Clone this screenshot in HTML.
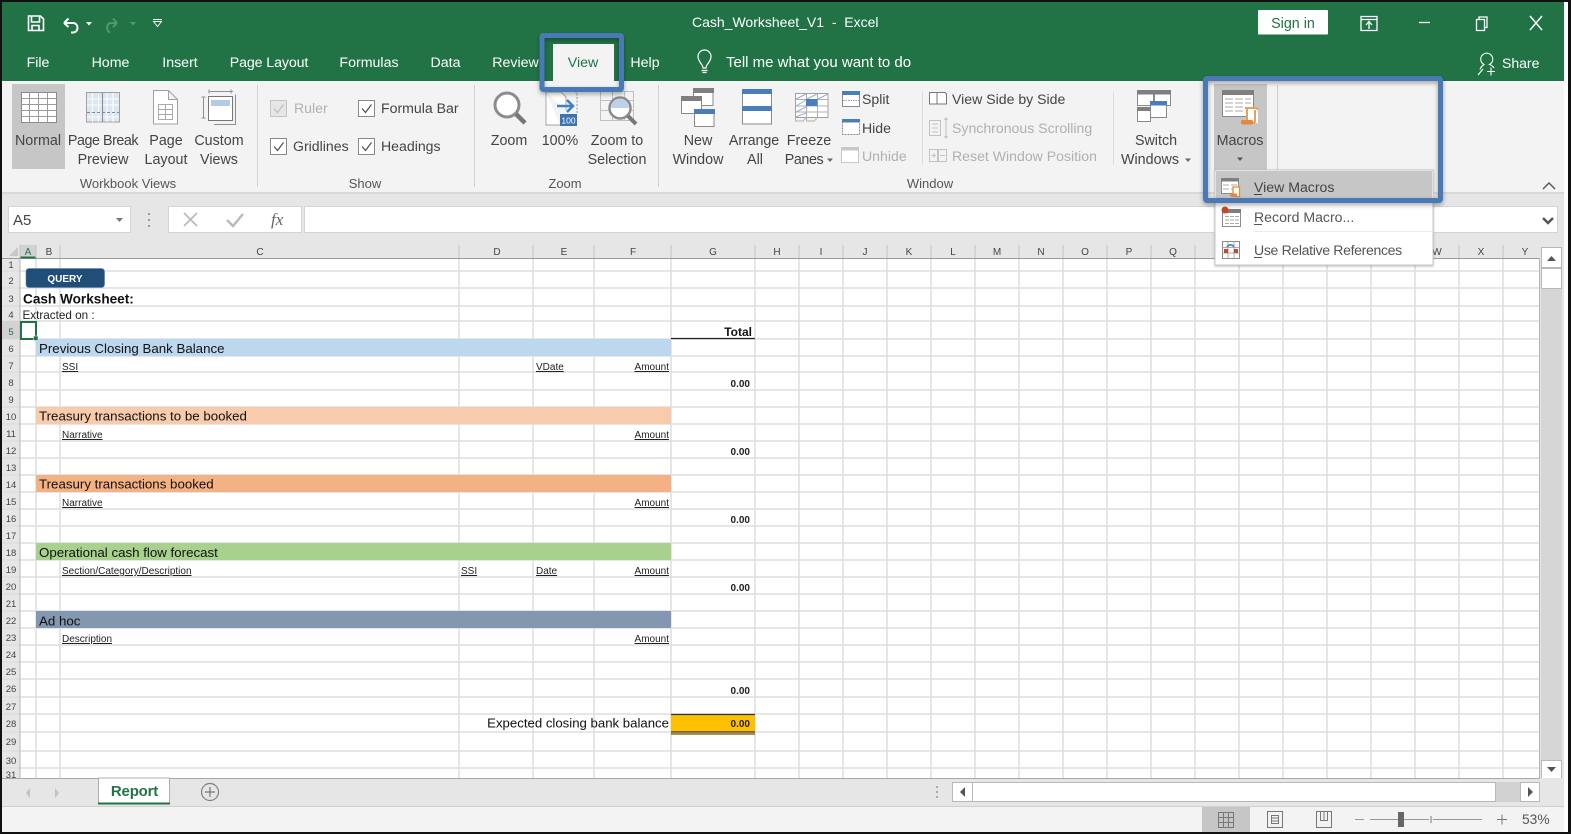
<!DOCTYPE html>
<html><head><meta charset="utf-8"><title>Cash_Worksheet_V1 - Excel</title>
<style>
html,body{margin:0;padding:0;background:#fff;width:1571px;height:834px;overflow:hidden}
svg{display:block;position:absolute;left:0;top:0;filter:blur(.3px)}
text{font-family:"Liberation Sans",sans-serif;white-space:pre}
.r{font-size:14.3px;fill:#444;text-anchor:middle}
.l{font-size:14.1px;fill:#444}
.g{font-size:14.1px;fill:#b0b0b0}
.gl{font-size:13px;fill:#555;text-anchor:middle}
.tab{font-size:14.2px;fill:#fff;text-anchor:middle}
.h{font-size:10px;fill:#444;text-anchor:middle}
.n{font-size:9.5px;fill:#444;text-anchor:middle}
.s{font-size:10px;fill:#222;text-decoration:underline}
.e{text-anchor:end}
.b{font-size:10px;font-weight:bold;fill:#222;text-anchor:end}
.band{font-size:13.3px;fill:#111}
</style></head><body>
<svg width="1571" height="834" viewBox="0 0 1571 834" xmlns="http://www.w3.org/2000/svg">
<defs>
<filter id="sh" x="-10%" y="-20%" width="120%" height="140%"><feDropShadow dx="0" dy="2" stdDeviation="2.5" flood-color="#000" flood-opacity=".35"/></filter>
<filter id="ms" x="-5%" y="-5%" width="110%" height="110%"><feDropShadow dx="0" dy="1" stdDeviation="1.2" flood-color="#000" flood-opacity=".25"/></filter>
</defs>
<!-- page base -->
<rect x="0" y="0" width="1571" height="834" fill="#fff"/>
<rect x="2" y="2" width="1562" height="79" fill="#217346"/>
<rect x="2" y="81" width="1562" height="111" fill="#f3f3f3"/>
<rect x="2" y="192" width="1562" height="66" fill="#e6e6e6"/>
<rect x="2" y="192" width="1562" height="2" fill="#d8d8d8"/>
<!-- formula bar -->
<rect x="8.5" y="206.5" width="122" height="26" fill="#fff" stroke="#d4d4d4"/>
<rect x="168.5" y="206.5" width="133" height="26" fill="#fff" stroke="#d4d4d4"/>
<rect x="304.5" y="206.5" width="1253" height="26" fill="#fff" stroke="#d4d4d4"/>
<text x="13" y="225" style="font-size:15px;fill:#444">A5</text>
<path d="M116 218h7l-3.500 4z" fill="#777"/>
<path d="M149 213v2M149 219v2M149 225v2" stroke="#999" stroke-width="2"/>
<path d="M184 213l13 13M197 213l-13 13" stroke="#bbb" stroke-width="1.800" fill="none"/>
<path d="M227 220l6 6 10-12" stroke="#bbb" stroke-width="2.500" fill="none"/>
<text x="271" y="225" style="font-family:'Liberation Serif',serif;font-style:italic;font-size:17px;fill:#666">fx</text>
<path d="M1543 218l5 5 5-5" stroke="#555" stroke-width="2.500" fill="none"/>
<!-- sheet -->
<rect x="2" y="258" width="18" height="520" fill="#e6e6e6"/>
<rect x="20" y="258" width="1520" height="520" fill="#fff"/>
<rect x="1540" y="243" width="24" height="563" fill="#e6e6e6"/>
<g stroke="#dedede" stroke-width="1.500" fill="none">
<path d="M36 258V778M60 258V778M459 258V778M533 258V778M594 258V778M671 258V778M755 258V778M799 258V778M843 258V778M887 258V778M931 258V778M975 258V778M1019 258V778M1063 258V778M1107 258V778M1151 258V778M1195 258V778M1239 258V778M1283 258V778M1327 258V778M1371 258V778M1415 258V778M1459 258V778M1503 258V778"/>
<path d="M2 271H1540M2 288H1540M2 306H1540M2 321H1540M2 339H1540M2 356H1540M2 372H1540M2 390H1540M2 407H1540M2 424H1540M2 441H1540M2 458H1540M2 475H1540M2 492H1540M2 509H1540M2 526H1540M2 543H1540M2 560H1540M2 577H1540M2 594H1540M2 611H1540M2 628H1540M2 645H1540M2 662H1540M2 679H1540M2 697H1540M2 714H1540M2 732H1540M2 751H1540M2 768H1540"/>
</g>
<!-- col header -->
<rect x="20" y="245" width="16" height="13" fill="#d2d2d2"/>
<path d="M2 258.500H1540" stroke="#9a9a9a" stroke-width="1"/>
<path d="M20 257.500H36" stroke="#217346" stroke-width="2"/>
<path d="M1539.500 258V778" stroke="#b5b5b5"/>
<path d="M20 245V258M36 245V258M60 245V258M459 245V258M533 245V258M594 245V258M671 245V258M755 245V258M799 245V258M843 245V258M887 245V258M931 245V258M975 245V258M1019 245V258M1063 245V258M1107 245V258M1151 245V258M1195 245V258M1239 245V258M1283 245V258M1327 245V258M1371 245V258M1415 245V258M1459 245V258M1503 245V258" stroke="#c4c4c4"/>
<path d="M18 247v9h-9z" fill="#c8c8c8"/>
<g class="col">
<text class="h" x="28" y="255" style="fill:#217346">A</text><text class="h" x="49" y="255">B</text><text class="h" x="260" y="255">C</text><text class="h" x="497" y="255">D</text><text class="h" x="564" y="255">E</text><text class="h" x="633" y="255">F</text><text class="h" x="713" y="255">G</text><text class="h" x="777" y="255">H</text><text class="h" x="821" y="255">I</text><text class="h" x="865" y="255">J</text><text class="h" x="909" y="255">K</text><text class="h" x="953" y="255">L</text><text class="h" x="997" y="255">M</text><text class="h" x="1041" y="255">N</text><text class="h" x="1085" y="255">O</text><text class="h" x="1129" y="255">P</text><text class="h" x="1173" y="255">Q</text><text class="h" x="1437" y="255">W</text><text class="h" x="1481" y="255">X</text><text class="h" x="1525" y="255">Y</text>
</g>
<!-- row headers -->
<rect x="2" y="321" width="18" height="18" fill="#d2d2d2"/>
<path d="M20 258V778" stroke="#b5b5b5"/>
<g>
<text class="n" x="11" y="268">1</text><text class="n" x="11" y="284">2</text><text class="n" x="11" y="302">3</text><text class="n" x="11" y="318">4</text><text class="n" x="11" y="335" style="fill:#217346">5</text><text class="n" x="11" y="352">6</text><text class="n" x="11" y="369">7</text><text class="n" x="11" y="386">8</text><text class="n" x="11" y="403">9</text><text class="n" x="11" y="420">10</text><text class="n" x="11" y="437">11</text><text class="n" x="11" y="454">12</text><text class="n" x="11" y="471">13</text><text class="n" x="11" y="488">14</text><text class="n" x="11" y="505">15</text><text class="n" x="11" y="522">16</text><text class="n" x="11" y="539">17</text><text class="n" x="11" y="556">18</text><text class="n" x="11" y="573">19</text><text class="n" x="11" y="590">20</text><text class="n" x="11" y="607">21</text><text class="n" x="11" y="624">22</text><text class="n" x="11" y="641">23</text><text class="n" x="11" y="658">24</text><text class="n" x="11" y="675">25</text><text class="n" x="11" y="692">26</text><text class="n" x="11" y="710">27</text><text class="n" x="11" y="727">28</text><text class="n" x="11" y="745">29</text><text class="n" x="11" y="764">30</text><text class="n" x="11" y="778">31</text>
</g>
<!-- bands -->
<rect x="36" y="339" width="635" height="17" fill="#bdd7ee"/>
<rect x="36" y="407" width="635" height="17" fill="#f8cbad"/>
<rect x="36" y="475" width="635" height="17" fill="#f4b183"/>
<rect x="36" y="543" width="635" height="17" fill="#a9d18e"/>
<rect x="36" y="611" width="635" height="17" fill="#8497b0"/>
<text class="band" x="39" y="353">Previous Closing Bank Balance</text>
<text class="band" x="39" y="420.500">Treasury transactions to be booked</text>
<text class="band" x="39" y="488.500">Treasury transactions booked</text>
<text class="band" x="39" y="557">Operational cash flow forecast</text>
<text class="band" x="39" y="625.500">Ad hoc</text>
<!-- query button -->
<rect x="26" y="268.500" width="78.500" height="19" rx="3" fill="#1f4e79" stroke="#5a7fa5" stroke-width=".6"/>
<text x="65" y="282" style="font-size:10px;font-weight:bold;fill:#fff;text-anchor:middle">QUERY</text>
<text x="23" y="303.500" style="font-size:13.6px;font-weight:bold;fill:#111">Cash Worksheet:</text>
<text x="22.500" y="319" style="font-size:11.7px;fill:#222">Extracted on :</text>
<!-- selected -->
<rect x="21" y="322" width="15" height="17" fill="none" stroke="#217346" stroke-width="2"/>
<rect x="33.500" y="336" width="4.500" height="4.500" fill="#217346" stroke="#fff" stroke-width=".5"/>
<!-- sub heads -->
<text class="s" x="62" y="370">SSI</text><text class="s" x="536" y="370">VDate</text><text class="s e" x="669" y="370">Amount</text>
<text class="s" x="62" y="438">Narrative</text><text class="s e" x="669" y="438">Amount</text>
<text class="s" x="62" y="506">Narrative</text><text class="s e" x="669" y="506">Amount</text>
<text class="s" x="62" y="574">Section/Category/Description</text><text class="s" x="461" y="574">SSI</text><text class="s" x="536" y="574">Date</text><text class="s e" x="669" y="574">Amount</text>
<text class="s" x="62" y="642">Description</text><text class="s e" x="669" y="642">Amount</text>
<text x="752" y="336" style="font-size:12px;font-weight:bold;fill:#111;text-anchor:end">Total</text>
<path d="M671 338.500H755" stroke="#222" stroke-width="1.200"/>
<text class="b" x="750" y="387">0.00</text><text class="b" x="750" y="455">0.00</text><text class="b" x="750" y="523">0.00</text><text class="b" x="750" y="591">0.00</text><text class="b" x="750" y="694">0.00</text>
<text x="669" y="727.500" style="font-size:13.2px;fill:#111;text-anchor:end">Expected closing bank balance</text>
<rect x="671" y="714" width="84" height="18" fill="#ffc000"/>
<path d="M671 714.500H755" stroke="#333" stroke-width="1.200"/>
<path d="M671 732H755" stroke="#333" stroke-width="1.200"/><path d="M671 734H755" stroke="#8a6a10" stroke-width="1.500"/>
<text class="b" x="750" y="727">0.00</text>
<!-- vertical scroll -->
<rect x="1541" y="247" width="21" height="532" fill="#d6d6d6"/>
<rect x="1541.500" y="247.500" width="20" height="20" fill="#fff" stroke="#b8b8b8"/>
<path d="M1547 261l4.500-5 4.500 5z" fill="#555"/>
<rect x="1541.500" y="268.500" width="20" height="20" fill="#fff" stroke="#b8b8b8"/>
<rect x="1541.500" y="760.500" width="20" height="19" fill="#fff" stroke="#b8b8b8"/>
<path d="M1547 767h9l-4.500 5z" fill="#555"/>
<!-- tab bar -->
<rect x="2" y="778" width="1562" height="29" fill="#e6e6e6"/>
<path d="M2 778.500H1540" stroke="#a8a8a8"/>
<path d="M2 806.500H1564" stroke="#d0d0d0"/>
<path d="M30 788l-4 5 4 5z" fill="#c2c2c2"/><path d="M55 788l4 5-4 5z" fill="#c2c2c2"/>
<rect x="98.500" y="778" width="71" height="25" fill="#fff" stroke="#b0b0b0"/>
<rect x="98" y="802.500" width="72" height="2" fill="#217346"/>
<text x="134.500" y="796" style="font-size:15px;font-weight:bold;fill:#217346;text-anchor:middle;letter-spacing:-.2px">Report</text>
<circle cx="210" cy="792" r="8.500" fill="none" stroke="#808080" stroke-width="1.200"/>
<path d="M205 792h10M210 787v10" stroke="#777" stroke-width="1.200"/>
<path d="M937 786v2M937 791v2M937 796v2" stroke="#aaa" stroke-width="2"/>
<rect x="952" y="782" width="588" height="20" fill="#d2d2d2"/>
<rect x="952.500" y="782.500" width="20" height="19" fill="#fff" stroke="#b8b8b8"/>
<rect x="972.500" y="782.500" width="523" height="19" fill="#fff" stroke="#b8b8b8"/>
<rect x="1520.500" y="782.500" width="19" height="19" fill="#fff" stroke="#b8b8b8"/>
<path d="M965 787l-5 5 5 5z" fill="#555"/><path d="M1528 787l5 5-5 5z" fill="#555"/>
<!-- status bar -->
<rect x="2" y="807" width="1562" height="25" fill="#f3f3f3"/>
<rect x="1202" y="807" width="48" height="25" fill="#c6c6c6"/>
<g fill="none" stroke="#777">
<path d="M1218.500 812.500h15v15h-15zM1218.500 817.500h15M1218.500 822.500h15M1223.500 812.500v15M1228.500 812.500v15"/>
<path d="M1267.500 811.500h15v16h-15zM1271.500 815.500h7v8h-7zM1272 818h6M1272 821h6"/>
<path d="M1316.500 811.500h15v16h-15zM1320.500 811.500v9h7v-9M1324 811.500v9"/>
<path d="M1355 819.500h9M1370 819.500h59M1433 819.500h49" stroke="#999"/>
<path d="M1431 816v7M1497 819.500h10M1502 814.500v10" stroke="#777"/>
</g>
<rect x="1398" y="812" width="6" height="15" fill="#666"/>
<text x="1522" y="824" style="font-size:13.8px;fill:#555">53%</text>
<!-- QAT -->
<g fill="none" stroke="#fff" stroke-width="1.600">
<path d="M28.500 16h12l3 3v11.500h-15zM31.500 16v6h8v-6M32 30.500v-5h7v5" />
<path d="M64 23l4.500-4.500M64 23l4.500 4M64 23h9c6 0 6 9.500 0 9.500h-2"  stroke-width="2"/>
<path d="M117 23l-4-4.500M117 23l-4 4M117 23h-6c-5 0-5 8-1 9.500" stroke="#4d9a70" stroke-width="2"/>
<path d="M153 19.500h9M153.500 21.500l4 5 4-5z" stroke-width=".9"/>
</g>
<path d="M86 22h6l-3 3.500z" fill="#fff"/><path d="M130 22h6l-3 3.500z" fill="#4d9a70"/>
<!-- title -->
<text x="692" y="27" style="font-size:14px;fill:#fff">Cash_Worksheet_V1  -  Excel</text>
<rect x="1258" y="10" width="70" height="24.500" rx="1" fill="#fff"/>
<text x="1293" y="28" style="font-size:14.300px;fill:#217346;text-anchor:middle">Sign in</text>
<g fill="none" stroke="#fff" stroke-width="1.300">
<path d="M1361 16.500h16v14h-16zM1361 19.500h16M1369 29v-7M1366 25l3-3.500 3 3.500"/>
<path d="M1419 22.500h11"/>
<path d="M1476.500 19.500h8v11h-8zM1479 19.500v-2.500h8v10.500h-2.500"/>
<path d="M1530 16l12 14M1542 16l-12 14" stroke-width="1.500"/>
</g>
<!-- tabs -->
<rect x="553" y="44" width="61" height="38" fill="#f3f3f3"/>
<text class="tab" x="38" y="67">File</text><text class="tab" x="110.500" y="67">Home</text><text class="tab" x="180" y="67">Insert</text><text class="tab" x="269" y="67" style="letter-spacing:-.1px">Page Layout</text><text class="tab" x="369" y="67">Formulas</text><text class="tab" x="445.500" y="67">Data</text><text class="tab" x="515.500" y="67">Review</text><text class="tab" x="583" y="67" style="fill:#217346">View</text><text class="tab" x="645" y="67">Help</text>
<path d="M703 70c0-4-5-6-5-11.500a6.500 6.500 0 0 1 13 0c0 5.500-5 7.500-5 11.500zM701.500 72.500h6M702.500 74.500h4" fill="none" stroke="#fff" stroke-width="1.200" transform="translate(0,-2)"/>
<text x="726" y="67" style="font-size:15px;fill:#fff">Tell me what you want to do</text>
<path d="M1484 71.500c1-3 2.500-4 4-5a6 6 0 1 1 5.500 0c2 .7 3.500 1.700 4.500 3.500M1482 77l5-6M1491 73.500h8M1495 69.500v8" fill="none" stroke="#fff" stroke-width="1.100" transform="translate(-4,-2)"/>
<text x="1502" y="68" style="font-size:14px;fill:#fff">Share</text>
<!-- Ribbon: Workbook views -->
<rect x="12" y="84" width="53" height="85" fill="#c6c6c6"/>
<rect x="21.500" y="92.500" width="35" height="30" fill="#fff" stroke="#8a8a8a"/>
<path d="M21.500 98.500h35M21.500 104.500h35M21.500 110.500h35M21.500 116.500h35M29.500 92.500v30M38.500 92.500v30M47.500 92.500v30" stroke="#9a9a9a" fill="none"/>
<rect x="86.500" y="92.500" width="33" height="29.500" fill="#fff" stroke="#a0a0a0"/>
<rect x="87" y="93" width="32" height="28.500" fill="#dbe7f3"/>
<path d="M92.500 93v29M98.500 93v29M107 93v29M113 93v29M87 99h32M87 105h32M87 117h32" stroke="#fff" fill="none"/>
<path d="M102.500 93v29" stroke="#909090" stroke-width="1.100"/><path d="M87 112.500h32" stroke="#888" stroke-dasharray="3 2"/>
<path d="M153.500 90.500h15l9 9v24.500h-24zM168.500 90.500v9h9" fill="#fff" stroke="#a0a0a0"/>
<path d="M158.500 104.500h14v15h-14zM158.500 109.500h14M158.500 114.500h14M165.500 104.500v15" fill="none" stroke="#aaa"/>
<g fill="none" stroke="#8f8f8f">
<path d="M209 91.500h24M209 89.500v4M231 89.500v4M203.500 97v21M201.500 97h4M201.500 118h4"/>
<rect x="208.500" y="96.500" width="24" height="24" fill="#fff" stroke="#777"/>
<path d="M214 124.500h21.500v-30"/>
</g>
<rect x="211" y="100" width="19" height="6" fill="#b3cbe4"/>
<text class="r" x="38" y="145">Normal</text><text class="r" x="103" y="145" style="letter-spacing:-.45px">Page Break</text><text class="r" x="103" y="164">Preview</text><text class="r" x="166" y="145">Page</text><text class="r" x="166" y="164">Layout</text><text class="r" x="219" y="145">Custom</text><text class="r" x="219" y="164">Views</text>
<text class="gl" x="128" y="188">Workbook Views</text>
<path d="M257.500 85V187M474.500 85V187M658.500 85V187" stroke="#d2d2d2"/>
<!-- Show -->
<g fill="#fff" stroke="#8a8a8a">
<rect x="270.500" y="100.500" width="16" height="16" fill="#e6e6e6" stroke="#c4c4c4"/>
<rect x="358.500" y="100.500" width="16" height="16"/>
<rect x="270.500" y="138.500" width="16" height="16"/>
<rect x="358.500" y="138.500" width="16" height="16"/>
</g>
<g fill="none" stroke="#444" stroke-width="1.100">
<path d="M274 108.500l3.500 4 6-8" stroke="#bbb"/><path d="M362 108.500l3.500 4 6-8"/><path d="M274 146.500l3.500 4 6-8"/><path d="M362 146.500l3.500 4 6-8"/>
</g>
<text class="g" x="294" y="113">Ruler</text><text class="l" x="381" y="113">Formula Bar</text><text class="l" x="293" y="151">Gridlines</text><text class="l" x="381" y="151">Headings</text>
<text class="gl" x="365" y="188">Show</text>
<!-- Zoom group -->
<circle cx="507" cy="105" r="12" fill="#fff" stroke="#8c8c8c" stroke-width="3"/>
<path d="M516 114l9 9" stroke="#777" stroke-width="4.500"/>
<path d="M546 92h15l5 5v13M546 92v33h14" fill="#fff" stroke="#aaa"/>
<path d="M546 125h14M575 92h2v22" fill="none" stroke="#999" stroke-dasharray="2 1.500"/>
<path d="M557 106h15M567 100l6 6-6 6" fill="none" stroke="#3f80bf" stroke-width="2.500"/>
<rect x="560" y="114" width="17" height="12" fill="#3f73ad"/>
<text x="568.500" y="123.500" style="font-size:8.500px;fill:#fff;text-anchor:middle">100</text>
<path d="M600.500 91.500h33v29h-33zM600.500 100.500h33M600.500 110.500h33M612.500 91.500v29M624.500 91.500v29" fill="none" stroke="#c0c0c0"/>
<circle cx="620" cy="108" r="10.500" fill="#fff" stroke="#8c8c8c" stroke-width="2.500"/>
<path d="M611 108a9 9 0 0 1 18 0z" fill="#bcd2e8"/>
<path d="M628 116l8 8" stroke="#777" stroke-width="4"/>
<text class="r" x="509" y="145">Zoom</text><text class="r" x="560" y="145">100%</text><text class="r" x="617" y="145">Zoom to</text><text class="r" x="617" y="164">Selection</text>
<text class="gl" x="565" y="188">Zoom</text>
<!-- Window group -->
<g stroke="#8a8a8a" fill="#fff">
<rect x="693.500" y="88.500" width="19.500" height="17"/><rect x="681.500" y="96.500" width="20" height="17"/><rect x="694.500" y="109.500" width="19.500" height="17"/>
<rect x="742.500" y="89.500" width="29" height="34.500"/>
<rect x="842.500" y="91.500" width="17" height="15"/><rect x="842.500" y="119.500" width="17" height="15" stroke-dasharray="2 1"/><rect x="841.500" y="147.500" width="17" height="15" stroke="#c8c8c8"/>
</g>
<rect x="693" y="88" width="21" height="5" fill="#7f7f7f"/><rect x="681" y="96" width="21" height="5" fill="#7f7f7f"/><rect x="694" y="109" width="21" height="5" fill="#4a7ebb"/>
<rect x="742" y="89" width="30" height="5" fill="#4a7ebb"/><rect x="742" y="106" width="30" height="5" fill="#4a7ebb"/>
<rect x="842" y="91" width="18" height="4" fill="#4a7ebb"/><rect x="842" y="119" width="18" height="3.500" fill="#4a7ebb"/><rect x="841" y="147" width="18" height="3.500" fill="#c8c8c8"/>
<path d="M843 100.500h16" stroke="#7a9cc4" stroke-dasharray="1.500 1"/>
<rect x="795.500" y="93.500" width="32.500" height="24" fill="#fff" stroke="#a0a0a0"/>
<path d="M795.500 99.500h32.500M795.500 106h32.500M795.500 112h32.500M806.500 93.500v24M817.500 93.500v24M795.500 117.500v3.500h8l2.500-3.500M806.500 117.500v3.500h8l2.500-3.500" fill="none" stroke="#b0b0b0"/>
<path d="M796 99l10-5M807 99l10-5M818 99l10-5M796 106l10-6M796 112l10-5M796 117l10-4" stroke="#8fb0d2" fill="none"/>
<rect x="806" y="99" width="11.500" height="7" fill="#4a7ebb"/>
<text class="r" x="698" y="145">New</text><text class="r" x="698" y="164">Window</text><text class="r" x="754" y="145" style="letter-spacing:-.1px">Arrange</text><text class="r" x="755" y="164">All</text><text class="r" x="809" y="145">Freeze</text><text class="r" x="804" y="164" style="letter-spacing:-.4px">Panes</text>
<path d="M827 158.500h6l-3 3.500z" fill="#666"/>
<text class="l" x="862" y="104">Split</text><text class="l" x="862" y="133">Hide</text><text class="g" x="862" y="161">Unhide</text>
<path d="M922.500 92V165M1113.500 92V165" stroke="#dcdcdc"/>
<path d="M929.500 92.500h7.500v11.500h-7.500zM937 92.500h8l1.500 1.500v10h-9.500z" fill="#fff" stroke="#777"/>
<text class="l" x="952" y="104">View Side by Side</text>
<path d="M929.500 120.500h11v15h-11zM932 124h6M932 128h6M932 132h6M946 118v20M944 120l2-2 2 2M944 136l2 2 2-2" fill="none" stroke="#c2c2c2"/>
<text class="g" x="952" y="133">Synchronous Scrolling</text>
<path d="M929.500 149.500h8v12h-8zM938.500 149.500h8v12h-8zM931 155.500h5M934 153v5M945 155.500h-5" fill="none" stroke="#c2c2c2"/>
<text class="g" x="952" y="161">Reset Window Position</text>
<g stroke="#8a8a8a" fill="#fff">
<rect x="1137.500" y="90.500" width="16" height="15"/><rect x="1154.500" y="90.500" width="16" height="15"/><rect x="1137.500" y="107.500" width="13" height="14"/><rect x="1150.500" y="101.500" width="16" height="16"/>
</g>
<rect x="1137" y="90" width="17" height="4.500" fill="#7f7f7f"/><rect x="1154" y="90" width="17" height="4.500" fill="#7f7f7f"/><rect x="1137" y="107" width="13" height="4" fill="#7f7f7f"/><rect x="1150" y="101" width="17" height="4.500" fill="#4a7ebb"/>
<text class="r" x="1156" y="145">Switch</text><text class="r" x="1150" y="164">Windows</text>
<path d="M1185 158.500h6l-3 3.500z" fill="#666"/>
<text class="gl" x="930" y="188">Window</text>
<!-- Macros -->
<rect x="1214" y="84" width="53" height="87" fill="#c6c6c6"/>
<path d="M1277.500 85V170" stroke="#d0d0d0"/>
<rect x="1222.500" y="90.500" width="31" height="26" fill="#fff" stroke="#8a8a8a"/>
<rect x="1222" y="90" width="32" height="5" fill="#7f7f7f"/>
<path d="M1225 99h8M1235 99h8M1245 99h6M1225 103h8M1235 103h8M1245 103h6M1225 107h8M1235 107h8M1225 111h8M1235 111h8" stroke="#aaa"/>
<path d="M1246 108h12v15h-12z" fill="#fff"/>
<path d="M1245 108h10c2 0 3 .5 3 2M1247 108v15M1247 123h6c1.500 0 2-1 2-2v-11" fill="none" stroke="#e8a060" stroke-width="2"/>
<rect x="1241" y="120" width="12" height="4.500" rx="1.500" fill="#e8873a"/>
<text class="r" x="1240" y="145">Macros</text>
<path d="M1237 157.500h6l-3 3.500z" fill="#555"/>
<!-- collapse -->
<path d="M1543 189l6-6 6 6" fill="none" stroke="#555" stroke-width="1.400"/>
<!-- menu -->
<rect x="1215" y="170" width="218" height="95" fill="#fff" stroke="#c6c6c6" filter="url(#ms)"/>
<rect x="1216" y="171" width="216" height="32" fill="#c6c6c6"/>
<rect x="1221.500" y="178.500" width="17" height="15" fill="#fff" stroke="#8a8a8a"/>
<rect x="1221" y="178" width="18" height="3.500" fill="#7f7f7f"/>
<path d="M1223 185h6M1231 185h6M1223 189h6M1231 189h6" stroke="#aaa"/>
<path d="M1233 187h6.500v9.500h-6.500z" fill="#fff" stroke="#e08a3c" stroke-width="1.300"/><rect x="1230" y="193.500" width="7" height="3" fill="#e8873a"/>
<text class="l" x="1254" y="192">View Macros</text>
<path d="M1254 194.500h8" stroke="#444"/>
<rect x="1222.500" y="209.500" width="18" height="17" fill="#fff" stroke="#8a8a8a"/>
<rect x="1222" y="209" width="19" height="4" fill="#7f7f7f"/>
<path d="M1225 216.500h4M1230 216.500h4M1235 216.500h4M1225 220h4M1230 220h4M1235 220h4M1225 223.500h4M1230 223.500h4M1235 223.500h4" stroke="#aaa"/>
<circle cx="1225" cy="210" r="3.500" fill="#c8472a"/>
<text class="l" x="1254" y="222" style="fill:#555">Record Macro...</text>
<path d="M1254 224.500h8" stroke="#555"/>
<path d="M1255 231.500H1432" stroke="#eaeaea"/>
<rect x="1222.500" y="241.500" width="17" height="17" fill="#fff" stroke="#8a8a8a"/>
<path d="M1222.500 247.500h17M1222.500 253h17M1228 241.500v17M1234 241.500v17" stroke="#aaa"/>
<path d="M1224 249h4v4h-4zM1234 249h4v4h-4z" fill="#c8472a"/>
<path d="M1227 247a4 4 0 0 1 7 0" fill="none" stroke="#3f73ad" stroke-width="1.500"/>
<text class="l" x="1254" y="255" style="fill:#555;letter-spacing:-.35px">Use Relative References</text>
<path d="M1254 257.500h8" stroke="#555"/>
<!-- highlight boxes -->
<rect x="542" y="35.500" width="79.500" height="54" rx="1.500" fill="none" stroke="#4a7ab5" stroke-width="5" filter="url(#sh)"/>
<rect x="1205.500" y="78.500" width="235" height="122" rx="1.500" fill="none" stroke="#4a7ab5" stroke-width="5" filter="url(#sh)"/>
<!-- screenshot frame -->
<rect x="0" y="0" width="1571" height="2" fill="#111"/>
<rect x="0" y="0" width="2" height="834" fill="#111"/>
<rect x="0" y="832" width="1571" height="2" fill="#111"/>
<rect x="1564" y="2" width="4" height="830" fill="#fff"/>
<rect x="1568" y="0" width="3" height="834" fill="#111"/>
</svg>
</body></html>
